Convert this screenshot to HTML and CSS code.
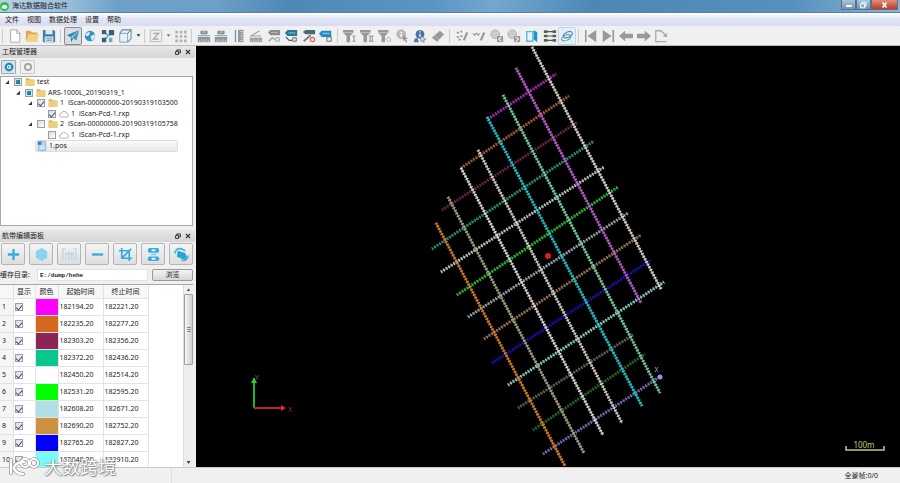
FILE: index.html
```html
<!DOCTYPE html>
<html lang="zh-CN">
<head>
<meta charset="utf-8">
<title>海达数据融合软件</title>
<link rel="stylesheet" href="styles.css">
</head>
<body>
<svg class="defs" aria-hidden="true">
  <defs>
    <symbol id="i-folder" viewBox="0 0 16 16"><path d="M1 2h5l2 2h7v10H1z" fill="#d9b458"/><path d="M1 5h14v9H1z" fill="#ecd07e"/></symbol>
    <symbol id="i-cloud" viewBox="0 0 16 16"><path d="M4 13a3 3 0 0 1-.5-6A4.500 4.500 0 0 1 12 6.500 3.300 3.300 0 0 1 12.500 13z" fill="#fff" stroke="#999" stroke-width="1.200"/></symbol>
    <symbol id="i-scale" viewBox="0 0 16 16"><path d="M1 9h14v6H1z" fill="#929292"/><path d="M3 12v3M5.500 11v4M8 12v3M10.500 11v4M13 12v3" stroke="#ddd" stroke-width=".8"/><path d="M1 7.500h14" stroke="#7ab0cc" stroke-width="1.200"/><path d="M4 2h8v4H4z" fill="#888"/><path d="M6 3.500h4" stroke="#ddd"/></symbol>
    <symbol id="i-funnel" viewBox="0 0 16 16"><path d="M0 1h12v3L8 8v7H4V8L0 4z" fill="#999"/><path d="M0 4h12" stroke="#ccc" stroke-width=".8"/></symbol>
    <symbol id="i-bubble" viewBox="0 0 16 16"><circle cx="6" cy="6" r="5" fill="#ccc" stroke="#b0b0b0"/><path d="M8 8h7v7H8z" fill="#999"/></symbol>
    <symbol id="i-float" viewBox="0 0 10 10"><path d="M3 1.500h6v5H3z" fill="none" stroke="#222" stroke-width="1.500"/><path d="M1 4h5v5H1z" fill="#ddd" stroke="#222" stroke-width="1.500"/></symbol>
    <symbol id="i-close" viewBox="0 0 10 10"><path d="M1.500 1.500l7 7M8.500 1.500l-7 7" stroke="#222" stroke-width="1.800"/></symbol>
  </defs>
</svg>
<div class="app">
  <header class="titlebar">
    <svg class="logo" viewBox="0 0 16 16"><circle cx="8" cy="8" r="8" fill="#32bd4d"/><path d="M3 10a5 5 0 0 1 10 0l-2 2H5z" fill="#e9fbe9"/></svg>
    <h1>海达数据融合软件</h1>
    <div class="winbtns">
      <button aria-label="最小化"><svg viewBox="0 0 16 10"><path d="M5 5h7v2.500H5z" fill="#fff"/></svg></button><button aria-label="还原"><svg viewBox="0 0 16 10"><path d="M6 3V1.500h5v5H9.500M4.500 3.500h5v5h-5z" fill="none" stroke="#fff" stroke-width="1.200"/></svg></button><button class="quit" aria-label="关闭"><svg viewBox="0 0 16 10"><path d="M5.500 2l5 6M10.500 2l-5 6" stroke="#fff" stroke-width="2"/></svg></button>
    </div>
  </header>
  <nav class="menu">
    <button>文件</button><button>视图</button><button>数据处理</button><button>设置</button><button>帮助</button>
  </nav>
  <div class="toolbar">
    <i class="grip"></i>
    <div class="group g-file">
      <button aria-label="新建"><svg viewBox="0 0 16 16"><path d="M3 1h7l3.500 3.500V15H3z" fill="#fff" stroke="#a2a2a2"/><path d="M10 1v4h3.500" fill="none" stroke="#a2a2a2"/></svg></button>
      <button aria-label="打开"><svg viewBox="0 0 16 16"><path d="M1 2h5l2 2h6v10H1z" fill="#d9aa52"/><path d="M4 6h12l-3 8.500H1z" fill="#f6cf80"/></svg></button>
      <button aria-label="保存"><svg viewBox="0 0 16 16"><path d="M1 1h12.500L15 2.500V15H1z" fill="#3f80a8"/><path d="M4 1h8v5H4z" fill="#dceaf2"/><path d="M3 8.500h10V15H3z" fill="#c9dce8"/><path d="M5 11h6M5 13h6" stroke="#6992ad"/></svg></button>
    </div>
    <i class="grip"></i>
    <div class="group g-view">
      <button class="on" aria-label="选择"><svg viewBox="0 0 16 16"><path d="M15 1L1 7l4.500 2.500z" fill="#2d83b8"/><path d="M15 1L7 10l5 3z" fill="#3f9ac9"/><path d="M5.500 9.500L6 15l2-3.500" fill="#2a6d9a"/></svg></button>
      <button aria-label="地球"><svg viewBox="0 0 16 16"><circle cx="8" cy="8" r="6" fill="#3391c8"/><path d="M3 5l4-2 1 2-2 3-3 0zM9 8l4-2 1 3-3 4-2-2z" fill="#d4edf8"/></svg></button>
      <button aria-label="适应窗口"><svg viewBox="0 0 16 16"><path d="M4 4l5 4M4 12l7-7" stroke="#68a7c9" stroke-width="1.800"/><path d="M1 1h5v5H1zM9 1h6v6H9zM1 10h5v5H1z" fill="#355f7b"/><path d="M9 10h4v5H9z" fill="#6fa7c4"/></svg></button>
      <button aria-label="立方体"><svg viewBox="0 0 16 16"><path d="M2 5h9v10H2z" fill="#e4f2f8" stroke="#6d9db8"/><path d="M2 5l3-4h10l-4 4M15 1v10l-4 4" fill="none" stroke="#5e91b0" stroke-width="1.200"/></svg></button>
      <button class="caret" aria-label="视角"><svg viewBox="0 0 8 8"><path d="M1 2h6L4 6z" fill="#333"/></svg></button>
    </div>
    <i class="grip"></i>
    <div class="group g-axis">
      <button aria-label="Z 轴"><svg viewBox="0 0 16 16"><path d="M1.500 1.500h13v13h-13z" fill="#eee" stroke="#b9b9b9"/><path d="M5 5h6l-6 6.500h6" fill="none" stroke="#a2a2a2" stroke-width="1.300"/></svg></button>
      <button class="caret" aria-label="轴选项"><svg viewBox="0 0 8 8"><path d="M1 2h6L4 6z" fill="#777"/></svg></button>
      <button aria-label="点阵"><svg viewBox="0 0 16 16"><path d="M3 2v13M8 2v13M13 2v13" stroke="#b0b0b0" stroke-width="3" stroke-dasharray="3 2"/></svg></button>
    </div>
    <i class="grip"></i>
    <div class="group g-measure">
      <button aria-label="二维测距"><svg><use href="#i-scale"/></svg></button>
      <button aria-label="三维测距"><svg><use href="#i-scale"/></svg></button>
      <button aria-label="测高"><svg viewBox="0 0 16 16"><path d="M4 1v14" stroke="#5f9fc4" stroke-width="1.500"/><path d="M7 1h6v14H7z" fill="#929292"/><path d="M9 3h4M10 5.500h3M9 8h4M10 10.500h3M9 13h4" stroke="#ddd" stroke-width=".9"/></svg></button>
      <button aria-label="测角"><svg viewBox="0 0 16 16"><path d="M1 10h14v5H1z" fill="#999"/><path d="M3 12v3M5.500 11v4M8 12v3M10.500 11v4M13 12v3" stroke="#ddd" stroke-width=".8"/><path d="M12 2L2 8h12" fill="none" stroke="#86a8b9" stroke-width="1.200"/></svg></button>
      <button aria-label="标注"><svg viewBox="0 0 16 16"><path d="M4 1h11v6H4L1 4z" fill="#8d8d8d"/><path d="M5 4h7" stroke="#bbb"/><path d="M2 14l4-4 3 2" fill="none" stroke="#999" stroke-width="1.300"/><path d="M10 10h4v4h-4z" fill="#eee" stroke="#999"/></svg></button>
      <button aria-label="添加标注"><svg viewBox="0 0 16 16"><path d="M4 1h11v7H4L1 4.500z" fill="#28789b"/><path d="M5 4.500h8" stroke="#9ccadc"/><path d="M2 9l4 4h3" fill="none" stroke="#555" stroke-width="1.300"/><path d="M10 10h4v4h-4z" fill="#eee" stroke="#555"/></svg></button>
      <button aria-label="删除标注"><svg viewBox="0 0 16 16"><path d="M4 1h11v5H4L1 3.500z" fill="#436b7b"/><path d="M2 14l8-7" stroke="#777" stroke-width="2"/><circle cx="12" cy="12" r="2.500" fill="#f5ddd8" stroke="#d26d5c" stroke-width="1.300"/></svg></button>
      <button aria-label="导出标注"><svg viewBox="0 0 16 16"><path d="M3 2h11v7H3L0 5z" fill="#218ec5"/><path d="M4 5h8" stroke="#a8dcf2"/><path d="M9 9h5v5H9z" fill="#e5eff3" stroke="#4e6670"/></svg></button>
    </div>
    <i class="grip"></i>
    <div class="group g-filter">
      <button aria-label="过滤一"><svg viewBox="0 0 16 16"><use href="#i-funnel" width="16" height="16"/><path d="M12.500 8v6M11 8h3M11 14h3" stroke="#888"/></svg></button>
      <button aria-label="过滤二"><svg viewBox="0 0 16 16"><use href="#i-funnel" width="16" height="16"/><path d="M11.500 8v6M14 8v6M10 8h5.500M10 14h5.500" stroke="#888"/></svg></button>
      <button aria-label="过滤清除"><svg viewBox="0 0 16 16"><use href="#i-funnel" width="16" height="16"/><circle cx="12" cy="12" r="2.500" fill="#eee" stroke="#aaa"/></svg></button>
      <button aria-label="点信息"><svg viewBox="0 0 16 16"><circle cx="6" cy="6" r="5" fill="#bbb" stroke="#aaa"/><path d="M6 3v1.500M6 5.500V9" stroke="#fff" stroke-width="1.500"/><path d="M8 7l6 4-3 .5 2 3-1.500 1-2-3L8 14z" fill="#999"/></svg></button>
      <button aria-label="帧信息"><svg viewBox="0 0 16 16"><circle cx="8" cy="6" r="5" fill="#4674a9"/><path d="M8 2.500v1.500M8 5.500V9" stroke="#fff" stroke-width="1.500"/><path d="M1 15c0-4 2-5 4-5l2 5z" fill="#4680b8"/><path d="M9 8l6 4-3 .5 1 2.500-2 0-1-2-1 1z" fill="#ddd" stroke="#777" stroke-width=".8"/></svg></button>
      <button aria-label="橡皮"><svg viewBox="0 0 16 16"><path d="M1 10l9-8 5 4-8 8.500z" fill="#999"/><path d="M4 7.500l5 4.500" stroke="#bbb"/></svg></button>
    </div>
    <i class="grip"></i>
    <div class="group g-edit">
      <button aria-label="画点"><svg viewBox="0 0 16 16"><path d="M2 4h2.500M6 3h2.500M2 9h2.500M6 8h2.500M4 12h2.500" stroke="#999" stroke-width="2"/><path d="M14 4l-4 9" stroke="#999" stroke-width="2.500"/></svg></button>
      <button aria-label="画线"><svg viewBox="0 0 16 16"><path d="M1 5l2 2 2-2 2 2 2-2" fill="none" stroke="#999" stroke-width="1.300"/><path d="M14 4l-4 9" stroke="#999" stroke-width="2.500"/></svg></button>
      <button aria-label="上一站"><svg viewBox="0 0 16 16"><use href="#i-bubble" width="16" height="16"/><path d="M13 9l-3 2.500 3 2.500" fill="none" stroke="#eee" stroke-width="1.300"/></svg></button>
      <button aria-label="下一站"><svg viewBox="0 0 16 16"><use href="#i-bubble" width="16" height="16"/><path d="M10 9l3 2.500-3 2.500" fill="none" stroke="#eee" stroke-width="1.300"/></svg></button>
      <button aria-label="剖面"><svg viewBox="0 0 16 16"><path d="M2 3h7v11H2z" fill="none" stroke="#55b9df" stroke-width="1.600"/><path d="M10 1l4 3v11l-4-3z" fill="#1596d0"/></svg></button>
      <button aria-label="航线"><svg viewBox="0 0 16 16"><path d="M3 3h10M3 8h10M3 13h10" stroke="#555" stroke-width="1.200"/><path d="M1 1.500h4v3H1zM11 1.500h4v3h-4zM1 6.500h4v3H1zM11 6.500h4v3h-4zM1 11.500h4v3H1zM11 11.500h4v3h-4z" fill="#56614e"/></svg></button>
      <button class="lit" aria-label="环绕"><svg viewBox="0 0 16 16"><g fill="none" stroke="#568db4" stroke-width="1.200"><ellipse cx="9" cy="6.500" rx="5.500" ry="3" transform="rotate(-25 9 6.500)"/><ellipse cx="7" cy="10" rx="5.500" ry="3" transform="rotate(-25 7 10)"/></g></svg></button>
    </div>
    <i class="grip"></i>
    <div class="group g-nav">
      <button aria-label="首帧"><svg viewBox="0 0 16 16"><path d="M2 1v14" stroke="#999" stroke-width="1.800"/><path d="M14 1v14L4 8z" fill="#999"/></svg></button>
      <button aria-label="末帧"><svg viewBox="0 0 16 16"><path d="M14 1v14" stroke="#999" stroke-width="1.800"/><path d="M2 1v14l10-7z" fill="#999"/></svg></button>
      <button aria-label="后退"><svg viewBox="0 0 16 16"><path d="M0 8l7-6v3.500h9v5H7V14z" fill="#999"/></svg></button>
      <button aria-label="前进"><svg viewBox="0 0 16 16"><path d="M16 8L9 2v3.500H0v5h9V14z" fill="#999"/></svg></button>
      <button aria-label="导出"><svg viewBox="0 0 16 16"><path d="M14 14.500H2V2h6l6 6" fill="none" stroke="#aaa" stroke-width="1.500"/><path d="M15 4v5h-5z" fill="#aaa"/></svg></button>
    </div>
  </div>
  <main class="work">
    <aside class="side">
      <section class="project">
        <div class="dock-title"><h2>工程管理器</h2><button aria-label="浮动"><svg><use href="#i-float"/></svg></button><button aria-label="关闭面板"><svg><use href="#i-close"/></svg></button></div>
        <div class="run">
          <button class="active" aria-label="开始"><svg viewBox="0 0 16 16"><circle cx="8" cy="8" r="7" fill="#2385bd"/><circle cx="8" cy="8" r="3.500" fill="#e9f6fc"/><path d="M7 5.500l3 2.500-3 2.500z" fill="#2385bd"/></svg></button>
          <button aria-label="停止"><svg viewBox="0 0 16 16"><circle cx="8" cy="8" r="5" fill="#eee" stroke="#a5a5a5" stroke-width="3"/></svg></button>
        </div>
        <div class="treebox">
          <ul class="tree">
            <li><i class="arrow"></i><label><input type="checkbox" class="part"><svg><use href="#i-folder"/></svg><span>test</span></label></li>
            <li class="l1"><i class="arrow"></i><label><input type="checkbox" class="part"><svg><use href="#i-folder"/></svg><span>ARS-1000L_20190319_1</span></label></li>
            <li class="l2"><i class="arrow"></i><label><input type="checkbox" checked><svg><use href="#i-folder"/></svg><b>1</b><span>iScan-00000000-20190319103500</span></label></li>
            <li class="l3"><i class="arrow none"></i><label><input type="checkbox" checked><svg><use href="#i-cloud"/></svg><b>1</b><span>iScan-Pcd-1.rxp</span></label></li>
            <li class="l2"><i class="arrow"></i><label><input type="checkbox"><svg><use href="#i-folder"/></svg><b>2</b><span>iScan-00000000-20190319105758</span></label></li>
            <li class="l3"><i class="arrow none"></i><label><input type="checkbox"><svg><use href="#i-cloud"/></svg><b>1</b><span>iScan-Pcd-1.rxp</span></label></li>
            <li class="pos"><svg viewBox="0 0 16 16"><path d="M2 1h12v14H2z" fill="#b9d8f0" stroke="#6da0cc"/><path d="M1 1h6v5H1z" fill="#3c7fb8"/><path d="M5 9h7M5 12h7" stroke="#fff"/></svg><span>1.pos</span></li>
          </ul>
        </div>
      </section>
      <section class="strips">
        <div class="dock-title"><h2>航带编辑面板</h2><button aria-label="浮动"><svg><use href="#i-float"/></svg></button><button aria-label="关闭面板"><svg><use href="#i-close"/></svg></button></div>
        <div class="tools">
          <button aria-label="添加"><svg viewBox="0 0 16 16"><path d="M8 2v12M2 8h12" stroke="#35ace0" stroke-width="2.500"/></svg></button>
          <button aria-label="多边形"><svg viewBox="0 0 16 16"><path d="M8 1l6 3.500v7L8 15l-6-3.500v-7z" fill="#8ad2f0"/></svg></button>
          <button aria-label="分段"><svg viewBox="0 0 16 16"><path d="M1 14V2h3M15 14V2h-3M4 13V6l3 3 3-3v7M7 4v10M12 5v9" fill="none" stroke="#b3d9e7" stroke-width="1.300"/></svg></button>
          <button aria-label="移除"><svg viewBox="0 0 16 16"><path d="M2 8h12" stroke="#35ace0" stroke-width="2.500"/></svg></button>
          <button aria-label="裁剪"><svg viewBox="0 0 16 16"><path d="M4 1v11h11M1 4h11v11M5 11l9-9" fill="none" stroke="#35ace0" stroke-width="1.800"/></svg></button>
          <button aria-label="合并"><svg viewBox="0 0 16 16"><rect x="2" y="1" width="12" height="5" rx="2" fill="#35ace0"/><rect x="2" y="10" width="12" height="5" rx="2" fill="#35ace0"/><path d="M6 3.500h4M6 12.500h4" stroke="#e5f7fc" stroke-width="2"/><path d="M5 8h6" stroke="#80c9e2" stroke-width="1.500"/></svg></button>
          <button aria-label="旋转"><svg viewBox="0 0 16 16"><path d="M4 4l8 2.500 2 5-3 2-8-3z" fill="#24a5d8"/><path d="M1 7c0-4 3-6 7-5l4 2M15 9c0 4-3 6-7 5" fill="none" stroke="#45b6dc" stroke-width="1.800"/></svg></button>
        </div>
        <div class="cache"><label for="dir">缓存目录:</label><input id="dir" type="text" value="E:/dump/hehe"><button>浏览</button></div>
        <div class="grid">
          <div class="rows">
          <table>
            <thead><tr><th class="no"></th><th class="ck">显示</th><th class="co">颜色</th><th class="tm">起始时间</th><th class="tm">终止时间</th></tr></thead>
            <tbody>
              <tr><th>1</th><td><input type="checkbox" aria-label="显示 1" checked></td><td class="magenta"></td><td>182194.20</td><td>182221.20</td></tr>
              <tr><th>2</th><td><input type="checkbox" aria-label="显示 2" checked></td><td class="orange"></td><td>182235.20</td><td>182277.20</td></tr>
              <tr><th>3</th><td><input type="checkbox" aria-label="显示 3" checked></td><td class="plum"></td><td>182303.20</td><td>182356.20</td></tr>
              <tr><th>4</th><td><input type="checkbox" aria-label="显示 4" checked></td><td class="teal"></td><td>182372.20</td><td>182436.20</td></tr>
              <tr><th>5</th><td><input type="checkbox" aria-label="显示 5" checked></td><td></td><td>182450.20</td><td>182514.20</td></tr>
              <tr><th>6</th><td><input type="checkbox" aria-label="显示 6" checked></td><td class="lime"></td><td>182531.20</td><td>182595.20</td></tr>
              <tr><th>7</th><td><input type="checkbox" aria-label="显示 7" checked></td><td class="powder"></td><td>182608.20</td><td>182671.20</td></tr>
              <tr><th>8</th><td><input type="checkbox" aria-label="显示 8" checked></td><td class="tan"></td><td>182690.20</td><td>182752.20</td></tr>
              <tr><th>9</th><td><input type="checkbox" aria-label="显示 9" checked></td><td class="blue"></td><td>182765.20</td><td>182827.20</td></tr>
              <tr><th>10</th><td><input type="checkbox" aria-label="显示 10" checked></td><td class="aqua"></td><td>182848.20</td><td>182910.20</td></tr>
            </tbody>
          </table>
          </div>
          <div class="scroll"><i class="up"></i><i class="thumb"></i><i class="down"></i></div>
        </div>
      </section>
    </aside>
    <svg class="cloud" viewBox="196 46 704 421" preserveAspectRatio="xMidYMid meet">
      <defs>
        <g id="across">
          <path d="M488 119L556 74" stroke="#b32bbd"/>
          <path d="M461 168L569 96" stroke="#a8603f"/>
          <path d="M442 210L578 122" stroke="#6b2b48"/>
          <path d="M432 249L594 141" stroke="#2f9a72"/>
          <path d="M441 272L604 167" stroke="#cfcfcf"/>
          <path d="M457 295L618 187" stroke="#2fc52f"/>
          <path d="M468 317L628 213" stroke="#a3abb0"/>
          <path d="M484 339L641 235" stroke="#a07c5c"/>
          <path d="M492 363L651 260" stroke="#1c12c5"/>
          <path d="M508 385L664 282" stroke="#8fd8cc"/>
          <path d="M518 408L633 335" stroke="#6d6553"/>
          <path d="M533 430L645 354" stroke="#2c6a2c"/>
          <path d="M543 454L661 376" stroke="#8470b8"/>
        </g>
        <g id="down">
          <path d="M436 223L565 466" stroke="#d9812c"/>
          <path d="M448 197L584 453" stroke="#a3a589"/>
          <path d="M461 168L603 435" stroke="#dcdcdc"/>
          <path d="M478 150L622 423" stroke="#d6d3c8"/>
          <path d="M487 117L642 406" stroke="#25c6cc"/>
          <path d="M503 95L660 393" stroke="#79d2a8"/>
          <path d="M516 68L641 303" stroke="#bd5fd0"/>
          <path d="M532 47L661 289" stroke="#dad7cf"/>
        </g>
      </defs>
      <g stroke-width="3.400" stroke-dasharray="1.200 1.800"><use href="#across"/></g>
      <g stroke-width="1.200" opacity=".6"><use href="#across"/></g>
      <g stroke-width="3.400" stroke-dasharray="1.200 1.800"><use href="#down"/></g>
      <g stroke-width="1.600" opacity=".75"><use href="#down"/></g>
      <circle cx="548" cy="256" r="3" fill="#d81f1f"/>
      <circle cx="660" cy="377" r="2.500" fill="#a88be8"/>
      <path d="M655 367l3 5M658 367l-3 5" stroke="#8f7aa8"/>
      <path d="M254 408V382" stroke="#20b32c" stroke-width="2"/><path d="M251 383l3-6 3 6z" fill="#28d236"/>
      <path d="M254 408h28" stroke="#bd2020" stroke-width="2"/><path d="M281 405l5 3-5 3z" fill="#d82828"/>
      <text x="255" y="380" class="axis-y">Y</text><text x="288" y="412" class="axis-x">X</text>
      <path d="M846 446v4h38v-4" fill="none" stroke="#c5c57c" stroke-width="1.500"/>
      <text x="864" y="448" class="scale-label">100m</text>
    </svg>
  </main>
  <footer class="status"><span>全景帧:0/0</span></footer>
  <div class="mark">
    <svg viewBox="0 0 32 22"><g fill="none" stroke-linecap="round"><path d="M3 4v13M16 6C8 6 6 10 6 12s3 6 9 6" stroke="#999" stroke-width="4"/><circle cx="17" cy="7" r="4" stroke="#999" stroke-width="3.500"/><circle cx="26" cy="7" r="4" stroke="#999" stroke-width="3.500"/><path d="M3 4v13M16 6C8 6 6 10 6 12s3 6 9 6" stroke="#fff" stroke-width="2.500"/><circle cx="17" cy="7" r="4" stroke="#fff" stroke-width="2"/><circle cx="26" cy="7" r="4" stroke="#fff" stroke-width="2"/></g></svg>
    <span>大数跨境</span>
  </div>
</div>
</body>
</html>
```
FILE: styles.css
```css
* { box-sizing: border-box; }
html, body { height: 100%; margin: 0; }
body, button, input {
  font-family: "Noto Sans", "Noto Sans CJK SC", sans-serif;
  font-size: 7px;
  line-height: 10px;
  color: #222;
}
button { padding: 0; margin: 0; border: 0; background: none; }
svg { display: block; }
.defs { position: absolute; width: 0; height: 0; }
h1, h2 { margin: 0; font-size: 7px; font-weight: 400; }

.app {
  position: relative;
  display: flex;
  flex-direction: column;
  height: 100vh;
  overflow: hidden;
  background: #f0f0f0;
}

/* title bar */
.titlebar {
  flex: 0 0 13px;
  display: flex;
  align-items: center;
  gap: 3px;
  border-bottom: 1px solid #5c7f9c;
  background:
    linear-gradient(90deg, rgba(190, 214, 233, .9) 0, rgba(170, 200, 225, .8) 7%, rgba(120, 165, 205, 0) 13%),
    linear-gradient(100deg, #6fa2ca 0, #6d9fc8 24%, #4f88b5 32%, #5c95c2 48%, #74a7cf 55%, #4d87b6 66%, #5790bd 88%, #8cb5d6 100%);
}
.logo { width: 9px; height: 9px; }
.winbtns { display: flex; align-self: flex-start; margin-left: auto; margin-right: 2px; }
.winbtns button {
  width: 15px;
  height: 10px;
  border: 1px solid #55718c;
  border-top: 0;
  background: linear-gradient(#a9c5dc, #6f95b5);
}
.winbtns .quit { width: 27px; background: linear-gradient(#dd9082, #c43a22); }
.winbtns svg { width: 100%; height: 8px; }

.menu {
  flex: 0 0 13px;
  display: flex;
  align-items: center;
  gap: 8px;
  padding-left: 5px;
  background: linear-gradient(#fff, #e3e6f5 40%, #d9dcf0);
}

/* toolbar */
.toolbar { flex: 0 0 20px; display: flex; align-items: center; border-bottom: 1px solid #bbb; }
.grip { flex: 0 0 6px; height: 14px; background: linear-gradient(90deg, transparent 2px, #ccc 2px, #ccc 3px, transparent 3px); }
.group { display: grid; grid-auto-flow: column; grid-auto-columns: 1fr; height: 18px; }
.group button { display: grid; place-items: center; border: 1px solid transparent; border-radius: 2px; }
.group svg { width: 14px; height: 14px; }
.group .on { border-color: #8a8a8a; background: #d9dde0; }
.group .lit { border-color: #bcd6e8; background: #e4f0f8; }
.group .caret svg { width: 5px; height: 5px; }
.g-file { width: 52px; }
.g-view { width: 78px; grid-template-columns: repeat(4, 1fr) 8px; }
.g-axis { width: 41px; grid-template-columns: 1fr 8px 1fr; }
.g-measure { width: 140px; }
.g-filter { width: 106px; }
.g-edit { width: 123px; }
.g-nav { width: 88px; }

/* docks */
.work { flex: 1; display: flex; min-height: 0; }
.side { flex: 0 0 196px; display: flex; flex-direction: column; gap: 4px; min-height: 0; padding-right: 1px; }
.project { flex: 45 1 0; display: flex; flex-direction: column; min-height: 0; }
.strips { flex: 59 1 0; display: flex; flex-direction: column; min-height: 0; }
.dock-title {
  flex: 0 0 12px;
  display: flex;
  align-items: center;
  gap: 4px;
  padding: 0 4px 0 2px;
  background: linear-gradient(#e8e8e8, #d5d5d5);
}
.dock-title h2 { flex: 1; }
.dock-title svg { width: 6px; height: 6px; }
.run { flex: 0 0 18px; display: flex; align-items: center; gap: 4px; padding-left: 1px; }
.run button { display: grid; place-items: center; width: 15px; height: 14px; border: 1px solid #ccc; border-radius: 1px; }
.run .active { border-color: #9aa; background: #dde4e8; }
.run svg { width: 10px; height: 10px; }

.treebox { flex: 1; min-height: 0; margin-right: 2px; border: 1px solid #a5a9ad; background: #fff; }
.tree { display: grid; grid-auto-rows: 1fr; height: 75px; margin: 0; padding: 0 0 0 3px; list-style: none; }
.tree li, .tree label { display: flex; align-items: center; }
.tree svg { width: 10px; height: 10px; margin: 0 2px 0 3px; }
.tree b { width: 8px; font-weight: 400; }
.tree .l1 { padding-left: 11px; }
.tree .l2 { padding-left: 23px; }
.tree .l3 { padding-left: 34px; }
.arrow { width: 4px; height: 4px; margin: 0 5px 0 1px; background: #333; clip-path: polygon(100% 0, 100% 100%, 0 100%); }
.arrow.none { visibility: hidden; }
.tree .pos { margin: 0 14px 0 31px; border: 1px solid #ddd; border-radius: 2px; background: linear-gradient(#fafafa, #e8e8e8); }
.tree .pos svg { margin-left: 1px; }

input[type="checkbox"] {
  appearance: none;
  display: grid;
  place-items: center;
  width: 8px;
  height: 8px;
  margin: 0;
  border: 1px solid #9b9fa5;
  background: linear-gradient(135deg, #d5d9df, #fff);
}
input[type="checkbox"]:checked::after {
  content: "";
  width: 3px;
  height: 5px;
  border: solid #3c4a78;
  border-width: 0 1px 1px 0;
  transform: rotate(40deg);
}
input[type="checkbox"].part { background: linear-gradient(135deg, #3f9dbd, #1c6484); box-shadow: inset 0 0 0 1px #cfe4ec; }

.tools { flex: 0 0 24px; display: flex; justify-content: space-between; align-items: center; padding: 0 2px 0 1px; }
.tools button {
  display: grid;
  place-items: center;
  width: 24px;
  height: 22px;
  border: 1px solid #b5b5b5;
  border-radius: 2px;
  background: linear-gradient(#f4f4f4, #dedede);
}
.tools svg { width: 15px; height: 15px; }
.cache { flex: 0 0 18px; display: flex; align-items: center; }
.cache label { width: 37px; white-space: nowrap; }
.cache input {
  flex: 1;
  min-width: 0;
  height: 12px;
  margin-right: 4px;
  padding: 0 2px;
  border: 1px solid #e2e2e2;
  background: #fff;
  font-family: "Liberation Mono", monospace;
  font-size: 6px;
  font-weight: 700;
}
.cache button {
  width: 41px;
  height: 12px;
  margin-right: 2px;
  border: 1px solid #999;
  border-radius: 2px;
  background: linear-gradient(#f4f4f4, #d8d8d8);
}

.grid { flex: 1; display: flex; min-height: 0; margin-right: 2px; border-top: 1px solid #a5a9ad; background: #fff; }
.rows { flex: 1; min-width: 0; overflow: hidden; }
table { width: 148px; table-layout: fixed; border-collapse: collapse; }
th, td { padding: 0; border: 1px solid #e3e3e3; border-width: 0 1px 1px 0; font-weight: 400; line-height: 10px; }
thead th { height: 13px; background: #f7f7f7; }
tbody th { height: 17px; padding-left: 2px; background: #f5f5f5; text-align: left; }
tbody td { height: 17px; padding-left: 1px; }
.no { width: 13px; }
.ck { width: 22px; }
.co { width: 23px; }
.tm { width: 45px; }
.magenta { background: #f0f; }
.orange { background: #d2691e; }
.plum { background: #8b2558; }
.teal { background: #08c78c; }
.lime { background: #0f0; }
.powder { background: #b0e0e6; }
.tan { background: #cd9240; }
.blue { background: #00f; }
.aqua { background: #76fdfb; }

.scroll { flex: 0 0 10px; display: flex; flex-direction: column; align-items: center; border-left: 1px solid #ddd; background: #eee; }
.up, .down { width: 4px; height: 3px; margin: 3px 0; background: #444; }
.up { clip-path: polygon(50% 0, 100% 100%, 0 100%); }
.down { margin-top: auto; clip-path: polygon(0 0, 100% 0, 50% 100%); }
.thumb {
  width: 9px;
  height: 39%;
  border: 1px solid #a0a0a0;
  border-radius: 1px;
  background: repeating-linear-gradient(#888 0 1px, transparent 1px 2px) center / 4px 5px no-repeat, linear-gradient(90deg, #f6f6f6, #cfcfcf);
}

/* viewport */
.cloud { flex: 1; min-width: 0; height: 100%; background: #000; fill: none; }
.axis-y { font-size: 7px; fill: #3a8f40; }
.axis-x { font-size: 7px; fill: #a02525; }
.scale-label { font-size: 8px; fill: #c5c57c; text-anchor: middle; }

.status {
  flex: 0 0 16px;
  display: flex;
  align-items: center;
  justify-content: flex-end;
  padding-right: 22px;
  border-top: 1px solid #ccc;
  background: linear-gradient(90deg, transparent 171px, #ddd 171px, #ddd 172px, transparent 172px);
}

/* watermark over the lower left corner */
.mark { position: absolute; left: 8px; bottom: 4px; display: flex; align-items: center; gap: 4px; }
.mark svg { width: 32px; height: 22px; }
.mark span { font-size: 18px; line-height: 24px; color: #fff; text-shadow: 0 0 1px #777, 0 0 2px #888, 1px 1px 1px #999; }
```
